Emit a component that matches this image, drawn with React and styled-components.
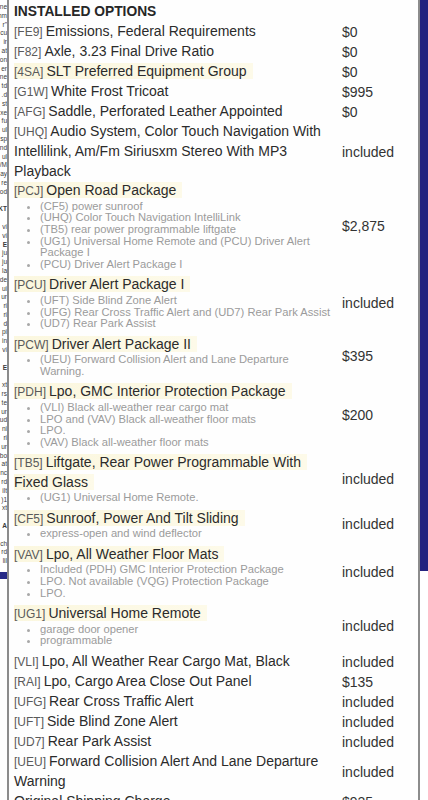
import React from 'react';
import styled, { createGlobalStyle } from 'styled-components';

const GlobalStyle = createGlobalStyle`
    html, body {
        margin: 0;
        padding: 0;
        background: #ffffff;
    }
    body {
        font-family: "Liberation Sans", Arial, sans-serif;
    }
`;

const Page = styled("div")`
    display: flex;
    width: 428px;
    height: 800px;
    overflow: hidden;
    background: #ffffff;
`;

// chopped text of the page behind the popup
const LeftStrip = styled("div")`
    width: 7px;
    flex-shrink: 0;
    overflow: hidden;
    display: flex;
    flex-direction: column;
    padding-top: 3px;
`;
const StripLine = styled("div")`
    height: 8.8px;
    flex-shrink: 0;
    font-size: 6.5px;
    line-height: 8px;
    white-space: nowrap;
    color: #3a3a3a;
    font-weight: ${props => props.$bold ? 700 : 400};
    text-align: right;
    direction: rtl;
`;
const StripBar = styled("div")`
    height: 7px;
    flex-shrink: 0;
    margin-top: 6px;
    background: #262a86;
`;

const RightStrip = styled("div")`
    width: 8px;
    flex-shrink: 0;
    display: flex;
    flex-direction: column;
`;
const NavyBlock = styled("div")`
    height: 571px;
    background: #24237f;
`;

const Panel = styled("div")`
    flex: 1;
    border-left: 2px solid #8c8c8c;
    border-right: 2px solid #8c8c8c;
    background: #fefefe;
    padding: 2px 0 0 5px;
    color: #2b2b2b;
`;

const Heading = styled("h2")`
    margin: 0 0 1px 0;
    font-size: 13.8px;
    line-height: 19px;
    font-weight: 700;
    color: #262626;
`;

const Row = styled("div")`
    display: grid;
    grid-template-columns: 318px 1fr;
    column-gap: 10px;
    align-items: center;
    padding-bottom: ${props => props.$package ? 5 : 0}px;
`;

const Description = styled("div")``;

const Title = styled("div")`
    font-size: 14px;
    line-height: ${props => props.$package ? 19.5 : 19.8}px;
`;

const Mark = styled("span")`
    background: ${props => props.$on ? 'linear-gradient(90deg, #fbf7df, #fdfae9)' : 'transparent'};
    box-decoration-break: clone;
    -webkit-box-decoration-break: clone;
    padding-right: ${props => props.$on ? 6 : 0}px;
`;

const Code = styled("span")`
    font-size: 12px;
    line-height: 1;
    color: #5a5a5a;
    margin-right: 3px;
`;

const Bullets = styled("ul")`
    margin: 0;
    padding: 0 0 0 26px;
    list-style: disc;
    color: #9b9b9b;
    font-size: 11.2px;
    line-height: 11.6px;
    & li::marker {
        font-size: 11px;
        color: #a8a8a8;
    }
`;

const Price = styled("div")`
    font-size: 14px;
    line-height: 20px;
    color: #333333;
`;

const options = [
    { code: 'FE9', name: 'Emissions, Federal Requirements', price: '$0' },
    { code: 'F82', name: 'Axle, 3.23 Final Drive Ratio', price: '$0' },
    { code: '4SA', name: 'SLT Preferred Equipment Group', price: '$0', highlight: true },
    { code: 'G1W', name: 'White Frost Tricoat', price: '$995' },
    { code: 'AFG', name: 'Saddle, Perforated Leather Appointed', price: '$0' },
    { code: 'UHQ', name: 'Audio System, Color Touch Navigation With Intellilink, Am/Fm Siriusxm Stereo With MP3 Playback', price: 'included' },
    { code: 'PCJ', name: 'Open Road Package', price: '$2,875', bullets: ['(CF5) power sunroof', '(UHQ) Color Touch Navigation IntelliLink', '(TB5) rear power programmable liftgate', '(UG1) Universal Home Remote and (PCU) Driver Alert Package I', '(PCU) Driver Alert Package I'] },
    { code: 'PCU', name: 'Driver Alert Package I', price: 'included', bullets: ['(UFT) Side Blind Zone Alert', '(UFG) Rear Cross Traffic Alert and (UD7) Rear Park Assist', '(UD7) Rear Park Assist'] },
    { code: 'PCW', name: 'Driver Alert Package II', price: '$395', bullets: ['(UEU) Forward Collision Alert and Lane Departure Warning.'] },
    { code: 'PDH', name: 'Lpo, GMC Interior Protection Package', price: '$200', bullets: ['(VLI) Black all-weather rear cargo mat', 'LPO and (VAV) Black all-weather floor mats', 'LPO.', '(VAV) Black all-weather floor mats'] },
    { code: 'TB5', name: 'Liftgate, Rear Power Programmable With Fixed Glass', price: 'included', bullets: ['(UG1) Universal Home Remote.'] },
    { code: 'CF5', name: 'Sunroof, Power And Tilt Sliding', price: 'included', bullets: ['express-open and wind deflector'] },
    { code: 'VAV', name: 'Lpo, All Weather Floor Mats', price: 'included', bullets: ['Included (PDH) GMC Interior Protection Package', 'LPO. Not available (VQG) Protection Package', 'LPO.'] },
    { code: 'UG1', name: 'Universal Home Remote', price: 'included', bullets: ['garage door opener', 'programmable'] },
    { code: 'VLI', name: 'Lpo, All Weather Rear Cargo Mat, Black', price: 'included' },
    { code: 'RAI', name: 'Lpo, Cargo Area Close Out Panel', price: '$135' },
    { code: 'UFG', name: 'Rear Cross Traffic Alert', price: 'included' },
    { code: 'UFT', name: 'Side Blind Zone Alert', price: 'included' },
    { code: 'UD7', name: 'Rear Park Assist', price: 'included' },
    { code: 'UEU', name: 'Forward Collision Alert And Lane Departure Warning', price: 'included' },
    { name: 'Original Shipping Charge', price: '$925' },
];

const stripText = [
    'ne', 'nm', '"r', 'cu', 'ir', 'at', 'on', 'er', 'ne', 'td', 'd.', 'st', 'xe', 'fu', 'ul', 'sp', 'nd', 'ul', 'M/', 'ay', 're', 'od',
    '', 'KT', '', 'vi', 'vi', 'E', 'ju', 'ju', 'la', 'de', 'ui', 'ur', 'ri', 'ri', 'd', 'pi', 'in', 'vi', '', 'E', '', 'xt', 'rs', 'te', 'ur',
    'ud', 'ni', 'ri', 'ur', 'bo', 'at', 'nc', 'rd', 'ilt', '1(', 'xt', '', 'A', '', 'ch', 'rd', 'lil',
];

function OptionRow({ option }) {
    const isPackage = Boolean(option.bullets);
    const marked = isPackage || option.highlight;
    return (
        <Row $package={isPackage}>
            <Description>
                <Title $package={isPackage}>
                    <Mark $on={marked}>
                        {option.code && <Code>[{option.code}]</Code>}
                        {option.name}
                    </Mark>
                </Title>
                {isPackage && <Bullets>{option.bullets.map((item, index) => {
                    return <li key={index}>{item}</li>
                })}</Bullets>}
            </Description>
            <Price>{option.price}</Price>
        </Row>
    )
}

function App() {
    return (
        <>
            <GlobalStyle />
            <Page>
                <LeftStrip>
                    {stripText.map((text, index) => {
                        const bold = text === 'KT' || text === 'E' || text === 'A';
                        return <StripLine key={index} $bold={bold}>{text}</StripLine>
                    })}
                    <StripBar />
                </LeftStrip>
                <Panel>
                    <Heading>INSTALLED OPTIONS</Heading>
                    {options.map((option, index) => {
                        return <OptionRow key={index} option={option} />
                    })}
                </Panel>
                <RightStrip>
                    <NavyBlock />
                </RightStrip>
            </Page>
        </>
    )
}

export default App;
